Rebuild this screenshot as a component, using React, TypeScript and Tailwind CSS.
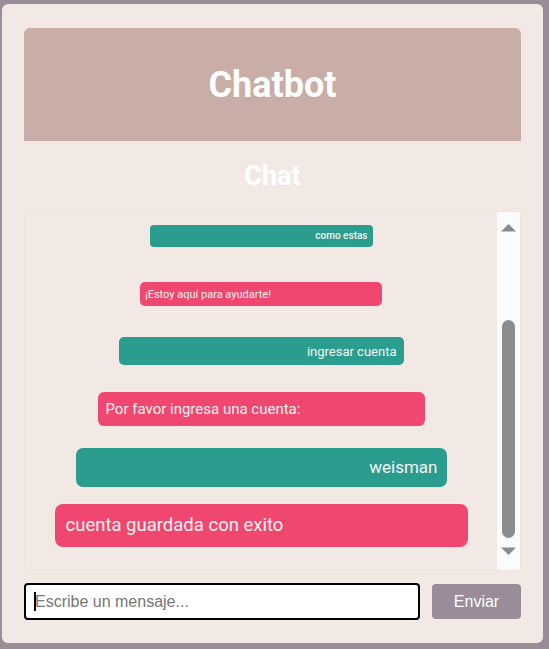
import { useState } from "react";

type Msg = {
  text: string;
  from: "user" | "bot";
  box: string;
  text_cls: string;
};

const MESSAGES: Msg[] = [
  {
    text: "como estas",
    from: "user",
    box: "mt-[13px] w-[223px] h-[22px] px-[5px] rounded-[4px]",
    text_cls: "text-[10px] font-medium",
  },
  {
    text: "¡Estoy aquí para ayudarte!",
    from: "bot",
    box: "mt-[35px] w-[242px] h-[24px] px-[5px] rounded-[5px]",
    text_cls: "text-[11px]",
  },
  {
    text: "ingresar cuenta",
    from: "user",
    box: "mt-[31px] w-[285px] h-[28px] px-[7px] rounded-[5px]",
    text_cls: "text-[13px]",
  },
  {
    text: "Por favor ingresa una cuenta:",
    from: "bot",
    box: "mt-[27px] w-[327px] h-[34px] px-[8px] rounded-[6px]",
    text_cls: "text-[15px]",
  },
  {
    text: "weisman",
    from: "user",
    box: "mt-[22px] w-[371px] h-[39px] px-[9px] rounded-[7px]",
    text_cls: "text-[17px]",
  },
  {
    text: "cuenta guardada con exito",
    from: "bot",
    box: "mt-[17px] w-[413px] h-[43px] px-[11px] rounded-[8px]",
    text_cls: "text-[18.5px]",
  },
];

function Scrollbar() {
  return (
    <div className="w-[23px] shrink-0 bg-[#fbfbfb] flex flex-col items-center">
      <svg width="15" height="8" viewBox="0 0 15 8" className="mt-[12px]">
        <path d="M0 7.5 L7.5 0 L15 7.5 Z" fill="#8c8c8c" />
      </svg>
      <div className="mt-[88px] w-[13px] h-[218px] rounded-full bg-[#8c8c8c]" />
      <svg width="15" height="8" viewBox="0 0 15 8" className="mt-[9px]">
        <path d="M0 0.5 L15 0.5 L7.5 8 Z" fill="#8c8c8c" />
      </svg>
    </div>
  );
}

export default function App() {
  const [draft, setDraft] = useState("");

  return (
    <div
      className="w-[549px] h-[649px] bg-[#9a8c98] pt-[4px] pl-[2px] pr-[6px] pb-[6px]"
      style={{ fontFamily: "Roboto, 'Noto Sans', sans-serif" }}
    >
      <div className="h-full bg-[#f2e9e4] rounded-[6px] px-[22px] pt-[24px] flex flex-col">
        <header className="h-[113px] bg-[#c9ada7] rounded-t-[6px] flex items-center justify-center">
          <h1 className="text-[36px] font-bold text-white leading-none">Chatbot</h1>
        </header>

        <h2 className="h-[70px] flex items-center justify-center text-[27px] font-bold text-white">
          Chat
        </h2>

        <div className="h-[360px] flex border border-[#ece6e3] rounded-[4px] overflow-hidden">
          <div className="flex-1 flex flex-col items-center overflow-hidden">
            {MESSAGES.map((m) => (
              <div
                key={m.text}
                className={`${m.box} shrink-0 flex items-center text-[#f7f3f1] ${
                  m.from === "user" ? "bg-[#2a9d8f] justify-end" : "bg-[#ef476f] justify-start"
                }`}
              >
                <span className={`${m.text_cls} leading-none whitespace-nowrap`}>{m.text}</span>
              </div>
            ))}
          </div>
          <Scrollbar />
        </div>

        <div className="mt-[12px] flex items-center gap-[12px]">
          <div className="relative">
            <input
              value={draft}
              onChange={(e) => setDraft(e.target.value)}
              placeholder="Escribe un mensaje..."
              className="w-[396px] h-[37px] bg-white border-2 border-black rounded-[4px] px-[9px] text-[16px] text-black placeholder:text-[#767676] outline-none"
              style={{ fontFamily: "'Liberation Sans', Arial, sans-serif" }}
            />
            {/* caret of the focused field */}
            <span className="absolute left-[10px] top-[9px] w-[2px] h-[19px] bg-black pointer-events-none" />
          </div>
          <button
            className="flex-1 h-[35px] bg-[#9a8c98] text-white rounded-[4px] text-[16px]"
            style={{ fontFamily: "'Liberation Sans', Arial, sans-serif" }}
          >
            Enviar
          </button>
        </div>
      </div>
    </div>
  );
}
